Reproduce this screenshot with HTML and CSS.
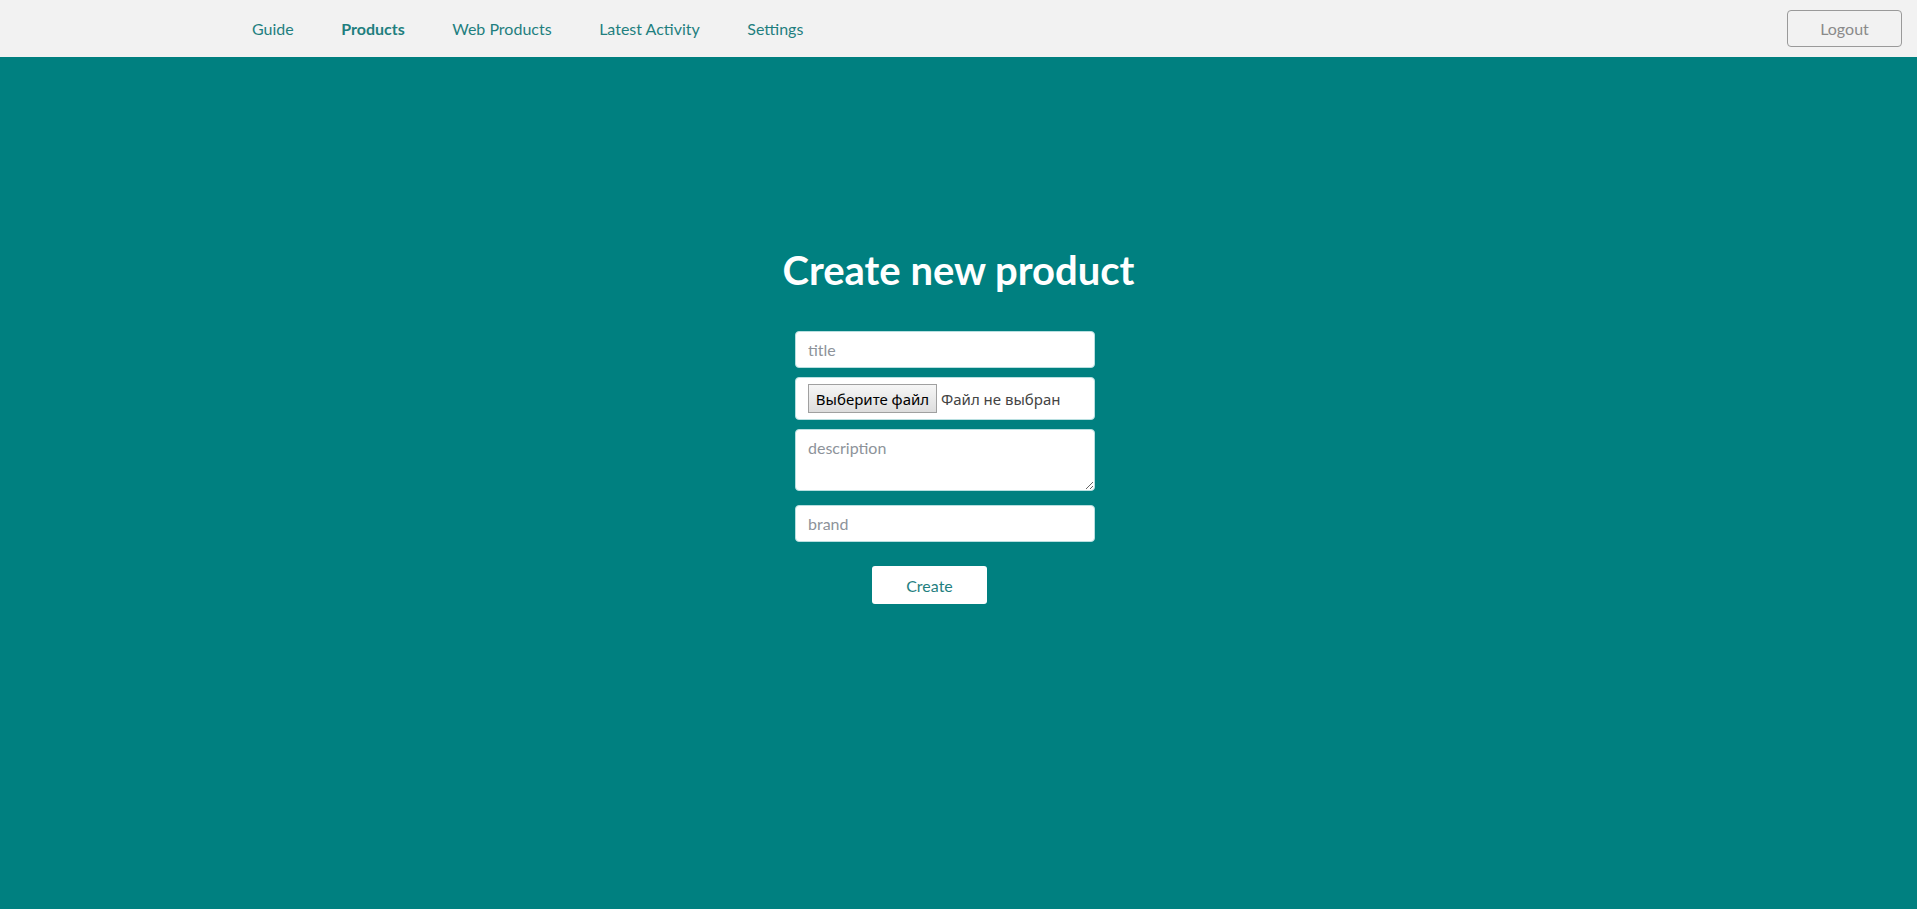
FILE: index.html
```html
<!DOCTYPE html>
<html lang="en">
<head>
<meta charset="utf-8">
<title>Create new product</title>
<link rel="stylesheet" href="styles.css">
</head>
<body>
<header class="topbar">
  <nav class="nav">
    <a class="nav-link" href="#">Guide</a>
    <a class="nav-link active" href="#">Products</a>
    <a class="nav-link" href="#">Web Products</a>
    <a class="nav-link" href="#">Latest Activity</a>
    <a class="nav-link" href="#">Settings</a>
  </nav>
  <button class="logout" type="button">Logout</button>
</header>
<main class="main">
  <h1 class="title">Create new product</h1>
  <form class="form">
    <input class="field" type="text" placeholder="title">
    <div class="field file-field">
      <button class="file-btn" type="button">Выберите файл</button>
      <span class="file-name">Файл не выбран</span>
    </div>
    <textarea class="field area" placeholder="description"></textarea>
    <input class="field brand" type="text" placeholder="brand">
    <button class="create" type="button">Create</button>
  </form>
</main>
</body>
</html>
```
FILE: styles.css
```css
* { box-sizing: border-box; }
html, body { height: 100%; }
body {
  margin: 0;
  font-family: "Lato", "Liberation Sans", sans-serif;
  font-size: 16px;
  background: #008080;
  display: flex;
  flex-direction: column;
}
.topbar {
  height: 57px;
  background: #f2f2f2;
  display: flex;
  align-items: center;
  justify-content: space-between;
  padding: 0 15px 0 252px;
  flex-shrink: 0;
}
.nav {
  display: flex;
  gap: 47.5px;
  align-items: center;
}
.nav-link {
  color: #1f7f7f;
  text-decoration: none;
  font-size: 16px;
}
.nav-link.active { font-weight: 700; }
.logout {
  width: 115px;
  height: 37px;
  background: transparent;
  border: 1px solid #9a9a9a;
  border-radius: 4px;
  color: #8a8a8a;
  font: inherit;
  font-size: 16px;
}
.main {
  flex: 1;
  display: flex;
  flex-direction: column;
  align-items: center;
}
.title {
  margin: 0;
  margin-top: 189px;
  color: #ffffff;
  font-size: 40px;
  font-weight: 700;
  line-height: 48px;
}
.form {
  width: 327px;
  margin-top: 37px;
  display: flex;
  flex-direction: column;
  align-items: flex-start;
}
.field {
  width: 300px;
  border: 1px solid #b8dfe0;
  border-radius: 4px;
  background: #fff;
  font: inherit;
  font-size: 16px;
  color: #333;
  padding: 6px 12px;
  outline: none;
}
input.field { height: 37px; }
.field::placeholder { color: #8d939a; }
.file-field {
  margin-top: 9px;
  height: 43px;
  display: flex;
  align-items: center;
  padding: 0 0 0 12px;
}
.file-btn {
  height: 29px;
  flex: 0 0 129px;
  padding: 0;
  border: 1px solid #a0a0a0;
  border-radius: 0;
  background: linear-gradient(#f6f6f6, #dddddd);
  color: #000;
  font-family: "Noto Sans", "Open Sans", sans-serif;
  font-size: 15px;
  white-space: nowrap;
}
.file-name {
  margin-left: 4px;
  color: #444;
  font-family: "Noto Sans", "Open Sans", sans-serif;
  font-size: 15px;
}
.area {
  margin-top: 9px;
  height: 62px;
  padding-top: 8px;
  resize: vertical;
  display: block;
}
.brand { margin-top: 14px; }
.create {
  margin-top: 24px;
  margin-left: 77px;
  width: 115px;
  height: 38px;
  border: none;
  border-radius: 3px;
  background: #fff;
  color: #1f7f7f;
  font: inherit;
  font-size: 16px;
}
```
